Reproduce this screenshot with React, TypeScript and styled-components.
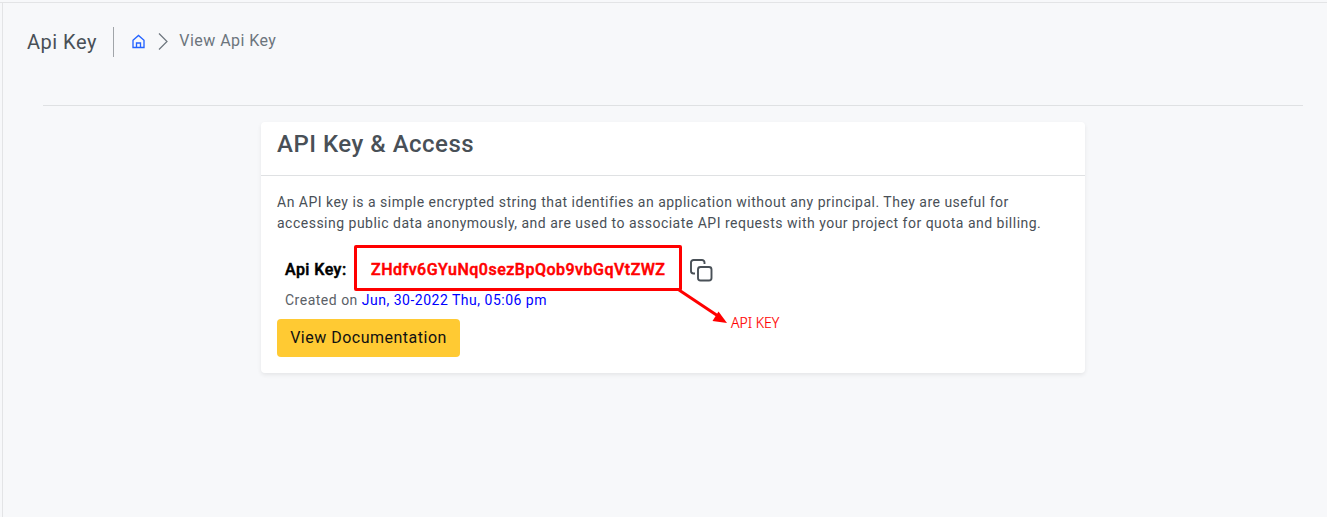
import React from "react";
import styled, { createGlobalStyle } from "styled-components";

const Global = createGlobalStyle`
  * { box-sizing: border-box; }
  body { margin: 0; background: #f7f8fa; font-family: Roboto, sans-serif; letter-spacing: 0.5px; color: #495057; overflow: hidden; }
`;
const Frame = styled.div`
  padding-top: 2px;
`;
const TopBar = styled.div`
  height: 1px; background: #e3e4e6;
`;
const Page = styled.main`
  display: flow-root; margin-left: 2px; height: 514px; border-left: 1px solid #e3e4e6;
`;
const Header = styled.header`
  display: flex; align-items: center; height: 30px; margin: 24px 0 0 24px;
`;
const Title = styled.h1`
  margin: 0; padding-right: 16px; height: 30px; line-height: 30px; font-size: 20px; font-weight: 400; border-right: 1px solid #a1a5a9;
`;
const Crumbs = styled.nav`
  display: flex; align-items: center; margin: -3px 0 0 18px; font-size: 16px; color: #6c757d;
  svg { display: block; margin-top: 2px; }
`;
const CrumbLabel = styled.span`
  margin-left: -0.5px; letter-spacing: 0.45px;
`;
const Rule = styled.hr`
  margin: 48px 24px 0 40px; border: 0; height: 1px; background: #dfe1e3;
`;
const Card = styled.section`
  position: relative; width: 824px; height: 251px; margin: 16px 0 0 258px; background: #fff; border-radius: 4px;
  box-shadow: 0 2px 4px rgba(0, 0, 0, 0.075);
`;
const CardTitle = styled.h2`
  margin: 0; height: 54px; padding: 8px 16px; font-size: 24px; line-height: 28px; font-weight: 500; border-bottom: 1px solid #dfe1e3;
`;
const Body = styled.div`
  padding: 16px;
`;
const Description = styled.p`
  margin: 0; font-size: 14px; line-height: 21px; white-space: nowrap; letter-spacing: 0.493px;
`;
const KeyRow = styled.div`
  display: flex; align-items: center; height: 46px; margin: 11px 0 0 8px; font-weight: 500; font-size: 16px; color: #000; -webkit-text-stroke: 0.5px currentColor;
  svg { margin-top: 5px; }
`;
const KeyLabel = styled.span`
  width: 69px; padding-top: 3px; white-space: nowrap; letter-spacing: 0.45px;
`;
const KeyBox = styled.div`
  width: 328px; height: 46px; line-height: 43px; margin-right: 8px; padding-left: 14px; border: 3px solid #f00; border-radius: 2px; color: #f00;
`;
const Created = styled.p`
  margin: -1px 0 0 8px; font-size: 14px; line-height: 20px; color: #5b6167;
  span { color: #00f; }
`;
const DocsButton = styled.button`
  display: block; width: 183px; height: 38px; margin-top: 9px; padding: 0 0 2px; border: 0; border-radius: 4px; background: #ffca33;
  font: 400 16px Roboto, sans-serif; letter-spacing: 0.5px; color: #111;
`;
const Callout = styled.div`
  position: absolute; left: 415px; top: 165px; display: flex; color: #f00;
`;
const CalloutLabel = styled.span`
  margin-top: 26px; letter-spacing: 0; font: 300 14px/20px "Noto Sans", "Open Sans", sans-serif; white-space: nowrap; -webkit-text-stroke: 0.2px #f00;
`;

export default function App() {
  return (
    <Frame>
      <Global />
      <TopBar />
      <Page>
        <Header>
          <Title>Api Key</Title>
          <Crumbs>
            <svg width="14" height="16" viewBox="0 0 14 16" fill="none" stroke="#2463ff" strokeWidth="1.35">
              <path d="M1 6.300 6.500 1.500 12 6.300V13.500H1z" />
              <path d="M4.500 13.500V9h4v4.500" />
            </svg>
            <svg width="34" height="20" viewBox="0 0 34 20" fill="none" stroke="#6c757d" strokeWidth="1.2">
              <path d="m13 1.500 8 8-8 8" />
            </svg>
            <CrumbLabel>View Api Key</CrumbLabel>
          </Crumbs>
        </Header>
        <Rule />
        <Card>
          <CardTitle>API Key &amp; Access</CardTitle>
          <Body>
            <Description>
              An API key is a simple encrypted string that identifies an application without any principal. They are useful for
              <br />
              accessing public data anonymously, and are used to associate API requests with your project for quota and billing.
            </Description>
            <KeyRow>
              <KeyLabel>Api Key:</KeyLabel>
              <KeyBox>ZHdfv6GYuNq0sezBpQob9vbGqVtZWZ</KeyBox>
              <svg width="24" height="24" viewBox="0 0 24 24" fill="none" stroke="#495057" strokeWidth="1.9">
                <rect x="8" y="8" width="13.500" height="13.500" rx="2.500" />
                <path d="M5 14.500H3.500A2.500 2.500 0 0 1 1 12V3.500A2.500 2.500 0 0 1 3.500 1H12a2.500 2.500 0 0 1 2.500 2.500V5" />
              </svg>
            </KeyRow>
            <Created>Created on <span>Jun, 30-2022 Thu, 05:06 pm</span></Created>
            <DocsButton>View Documentation</DocsButton>
          </Body>
          <Callout>
            <svg width="55" height="40" viewBox="0 0 55 40">
              <path d="M3 3 42 29" stroke="#f00" strokeWidth="3" />
              <path d="m51 36-14.500-2 6-9.500z" fill="#f00" />
            </svg>
            <CalloutLabel>API KEY</CalloutLabel>
          </Callout>
        </Card>
      </Page>
    </Frame>
  );
}
